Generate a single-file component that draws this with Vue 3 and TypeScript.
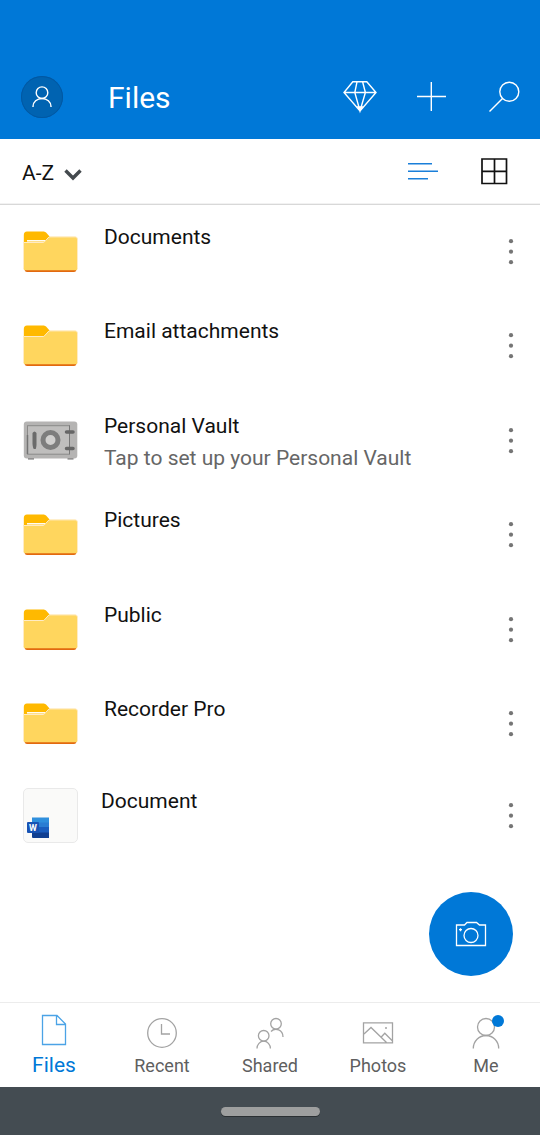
<script setup lang="ts">
import { ref } from 'vue'

type Kind = 'folder' | 'vault' | 'word'
interface Entry {
  name: string
  kind: Kind
  note?: string
  filled?: boolean
}

const entries: Entry[] = [
  { name: 'Documents', kind: 'folder', filled: true },
  { name: 'Email attachments', kind: 'folder' },
  { name: 'Personal Vault', kind: 'vault', note: 'Tap to set up your Personal Vault' },
  { name: 'Pictures', kind: 'folder', filled: true },
  { name: 'Public', kind: 'folder' },
  { name: 'Recorder Pro', kind: 'folder', filled: true },
  { name: 'Document', kind: 'word' },
]

const tabs = ['Files', 'Recent', 'Shared', 'Photos', 'Me']
const activeTab = ref('Files')
const sort = ref('A-Z')
</script>

<template>
  <div class="app">
    <header class="header">
      <button class="avatar" aria-label="Account">
        <svg width="42" height="42" viewBox="0 0 42 42">
          <circle cx="21" cy="16.7" r="5.8" />
          <path d="M12 31v-.5a9 8 0 0 1 18 0v.5" />
        </svg>
      </button>
      <h1>Files</h1>
      <div class="actions">
        <button aria-label="Go premium">
          <svg width="48" height="48" viewBox="0 0 48 48">
            <path d="M16.8 8.8h14l9.2 10.7L24 38 8 19.5zM8 19.5h32M21 8.8l-2.2 10.7L24 38l5.4-18.5L26.6 8.8" />
            <path class="solid" d="M21.8 34h4.400L24 37.500z" />
          </svg>
        </button>
        <button aria-label="Add">
          <svg width="48" height="48" viewBox="0 0 48 48">
            <path d="M23.3 9v29M9 23.5h29" />
          </svg>
        </button>
        <button aria-label="Search">
          <svg width="48" height="48" viewBox="0 0 48 48">
            <circle cx="29.3" cy="18.7" r="9.5" />
            <path d="M22.5 25.5L9.5 38.5" />
          </svg>
        </button>
      </div>
    </header>

    <div class="toolbar">
      <div class="sort">
        <select v-model="sort" aria-label="Sort order">
          <option>A-Z</option>
          <option>Z-A</option>
        </select>
        <svg width="18" height="12" viewBox="0 0 18 12">
          <path d="M1.5 1.5L9 9l7.5-7.5" />
        </svg>
      </div>
      <div class="views">
        <button class="list-view" aria-label="List view">
          <svg width="48" height="48" viewBox="0 0 48 48">
            <path d="M10 16.8h24M10 24.200h30M10 31.800h20" />
          </svg>
        </button>
        <button aria-label="Grid view">
          <svg width="48" height="48" viewBox="0 0 48 48">
            <path d="M12 12h24.500v24.500H12zM24.500 12v24.500M12 24.300h24.500" />
          </svg>
        </button>
      </div>
    </div>

    <main>
      <ul class="files">
        <li v-for="e in entries" :key="e.name" :class="e.kind">
          <a href="#" class="entry">
            <svg v-if="e.kind === 'folder'" class="thumb" width="55" height="42" viewBox="0 0 55 42">
              <path fill="#ffb900" d="M4 0.500h16c1.500 0 2.500.5 3.500 1.500l3.500 4L21 12H.8V4Q.8.500 4 .500z" />
              <path v-if="e.filled" d="M4 9.800h18" stroke="#fff" stroke-width="1.500" />
              <path fill="#e2690f" d="M1.500 36h52v2.700q-.5 2.300-2.500 2.300H4q-2 0-2.500-2.300z" />
              <path fill="#ffd65e" d="M.5 11.500h20.300L26 5.800h26.200q2.300 0 2.300 2.300v29.500q0 1.700-1.500 1.700H2Q.5 39.300.5 37.600z" />
              <path fill="none" stroke="#ffebc4" d="M.5 37.500v-26h20.300L26 5.900h26.200q2.300 0 2.300 2.300v29.300" />
            </svg>
            <svg v-else-if="e.kind === 'vault'" class="thumb" width="55" height="41" viewBox="0 0 55 41">
              <path fill="#6f6f6f" d="M5 37h6v2.500H5zM44.500 37h6v2.500h-6z" />
              <rect x=".8" y="1.500" width="53.500" height="37" rx="3" fill="#b5b4b3" />
              <rect x="4.500" y="5.700" width="42" height="28.500" fill="#bfbebd" stroke="#8b8a89" />
              <path d="M46.500 5.500v28.700" stroke="#777" />
              <path d="M4.500 15v19" stroke="#747474" stroke-width="1.500" />
              <path fill="#6b6b6b" d="M9.500 13q2-3 4 0v12q-.4 4-1 4h-1.500q-1 0-1.500-5z" />
              <circle cx="27.500" cy="20" r="7.500" fill="#d0cfce" stroke="#7d7d7d" stroke-width="5" />
              <path d="M43.500 12h6.500M43.500 28.500h6.500" stroke="#666" stroke-width="3.500" stroke-linecap="round" />
            </svg>
            <svg v-else class="thumb" width="55" height="55" viewBox="0 0 55 55">
              <rect x=".5" y=".5" width="54" height="54" rx="4.500" fill="#fafaf9" stroke="#e9e9e9" />
              <path fill="#2f8fdd" d="M9 29.500h17V35H9z" />
              <path fill="#2a7dd3" d="M9 34.500h17V39H9z" />
              <path fill="#1a5dbe" d="M9 39h17v6H9z" />
              <path fill="#103f91" d="M9 44.500h17V50H10q-1 0-1-1z" />
              <rect x="4" y="34" width="12" height="11" rx="1" fill="#1853b4" />
              <text class="word-mark" x="10" y="43" text-anchor="middle">W</text>
            </svg>
            <span class="text">
              <span class="name">{{ e.name }}</span>
              <span v-if="e.note" class="note">{{ e.note }}</span>
            </span>
          </a>
          <button class="more" :aria-label="`More options for ${e.name}`">
            <svg width="48" height="48" viewBox="0 0 48 48">
              <circle cx="24" cy="13.2" r="2.1" />
              <circle cx="24" cy="23.7" r="2.1" />
              <circle cx="24" cy="34.2" r="2.1" />
            </svg>
          </button>
        </li>
      </ul>
      <button class="camera" aria-label="Take a photo">
        <svg width="84" height="84" viewBox="0 0 84 84">
          <path d="M27.500 33h8l2.500-2.500h9.500L50.500 33h6v20.500h-29z" />
          <circle cx="42" cy="43.500" r="7" />
          <path d="M30 37.700h3M31.500 36.200v3" />
        </svg>
      </button>
    </main>

    <nav class="tabs">
      <a
        v-for="t in tabs"
        :key="t"
        href="#"
        :class="{ active: t === activeTab }"
        @click.prevent="activeTab = t"
      >
        <svg width="40" height="36" viewBox="0 0 40 36">
          <path v-if="t === 'Files'" d="M8.500 2.500h14.500l8.500 8.500v20.500h-23zM22.500 2.500v9h9" />
          <template v-else-if="t === 'Recent'">
            <circle cx="20" cy="20" r="14.300" />
            <path d="M19.500 11v10H28" />
          </template>
          <template v-else-if="t === 'Shared'">
            <circle cx="13.700" cy="22.800" r="5.300" />
            <path d="M7 35.500a6.700 7.300 0 0 1 13.400 0" />
            <circle cx="26" cy="10.800" r="5.300" />
            <path d="M21 18.500c4.500-4.500 12-1.500 12 5.500" />
          </template>
          <template v-else-if="t === 'Photos'">
            <path d="M5.500 9.800h29v20h-29zM6 21l7-6.500 15.500 15M23 24.300l3.800-4 7.700 7.700" />
            <circle class="dot" cx="28" cy="15" r="1" />
          </template>
          <template v-else>
            <circle cx="20" cy="14" r="8.500" />
            <path d="M7.300 35.500a12.700 13 0 0 1 25.400 0" />
            <circle class="badge" cx="32" cy="8" r="6" />
          </template>
        </svg>
        <span>{{ t }}</span>
      </a>
    </nav>
    <footer class="system"><span class="pill"></span></footer>
  </div>
</template>

<style>
body {
  margin: 0;
  background: #fff;
}
</style>

<style scoped>
.app {
  display: flex;
  flex-direction: column;
  min-height: 100vh;
  font-family: Roboto, "Noto Sans", sans-serif;
  color: #111;
}
button {
  display: block;
  padding: 0;
  border: 0;
  background: none;
  cursor: pointer;
}
svg {
  display: block;
  flex: none;
}
a {
  color: inherit;
  text-decoration: none;
}
.header {
  display: flex;
  align-items: center;
  padding: 55px 12px 0 21px;
  height: 84px;
  background: #0078d7;
  color: #fff;
}
.header svg {
  fill: none;
  stroke: #fff;
  stroke-width: 1.4;
}
.header .solid {
  fill: #fff;
}
.avatar {
  border-radius: 50%;
  background: #0063b1;
  box-shadow: inset 0 0 0 1px #0058a3;
}
h1 {
  flex: 1;
  margin: 0 0 0 45px;
  padding-top: 2px;
  font-size: 30px;
  line-height: 40px;
  font-weight: 400;
}
.actions,
.views {
  display: flex;
  gap: 24px;
}
.toolbar {
  display: flex;
  align-items: center;
  justify-content: space-between;
  height: 64px;
  padding: 0 22px;
  border-bottom: 1px solid #f2f2f2;
  box-shadow: 0 1px 0 #d8d8d8;
}
.sort {
  display: grid;
  align-items: center;
  margin-top: 4px;
}
.sort select {
  grid-area: 1 / 1;
  width: 60px;
  padding: 0;
  border: 0;
  appearance: none;
  background: none;
  color: #111;
  font: 21px/30px Roboto, "Noto Sans", sans-serif;
}
.sort svg {
  grid-area: 1 / 1;
  justify-self: end;
  margin-top: 4px;
  pointer-events: none;
  fill: none;
  stroke: #444a4e;
  stroke-width: 3.4;
}
.views svg {
  fill: none;
  stroke: #111;
  stroke-width: 1.7;
}
.views .list-view svg {
  stroke: #1a7fd9;
  stroke-width: 1.6;
}
main {
  position: relative;
  flex: 1;
}
.files {
  margin: 0;
  padding: 0;
  list-style: none;
}
.files li {
  display: flex;
  align-items: center;
  height: 94px;
  padding: 0 5px 0 23px;
}
.files li:nth-child(odd) {
  height: 95px;
}
.files li.word {
  height: 89px;
}
.entry {
  flex: 1;
  display: flex;
  align-items: center;
  gap: 26px;
  min-width: 0;
}
.word .entry {
  gap: 23px;
}
.word-mark {
  fill: #fff;
  font: bold 9px Roboto, sans-serif;
}
.text {
  display: flex;
  flex-direction: column;
  height: 62px;
  font-size: 21px;
  line-height: 32px;
}
.note {
  color: #666;
}
.more svg {
  fill: #757575;
}
.camera {
  position: absolute;
  right: 27px;
  bottom: 26px;
  border-radius: 50%;
  background: #0078d7;
}
.camera svg {
  fill: none;
  stroke: #fff;
  stroke-width: 1.3;
}
.tabs {
  display: grid;
  grid-template-columns: repeat(5, 1fr);
  height: 74px;
  padding-top: 10px;
  border-top: 1px solid #ececec;
}
.tabs a {
  display: flex;
  flex-direction: column;
  align-items: center;
  color: #5f5f5f;
  font-size: 18px;
  line-height: 34px;
}
.tabs .active {
  color: #0078d7;
  font-size: 21px;
  line-height: 32px;
}
.tabs svg {
  fill: none;
  stroke: #a3a3a3;
  stroke-width: 1.3;
}
.tabs .active svg {
  stroke: #4ba3e6;
}
.tabs .dot {
  fill: #a3a3a3;
  stroke: none;
}
.tabs .badge {
  fill: #0078d7;
  stroke: none;
}
.system {
  display: flex;
  align-items: center;
  justify-content: center;
  height: 48px;
  background: #444c52;
}
.pill {
  width: 99px;
  height: 9px;
  border-radius: 5px;
  background: #9e9f9f;
  box-shadow: 0 1px 0 #2b3033;
}
</style>
